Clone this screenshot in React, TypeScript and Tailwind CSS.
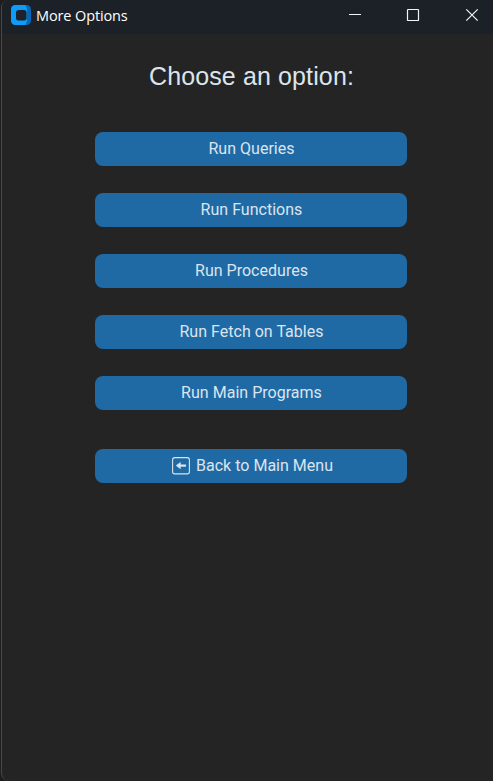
import React from "react";

const options = ["Run Queries", "Run Functions", "Run Procedures", "Run Fetch on Tables", "Run Main Programs"];

function AppLogo() {
  return (
    <svg width="20" height="20" viewBox="0 0 20 20" className="shrink-0">
      <rect width="20" height="20" rx="4.5" fill="#0a66b7" />
      <path d="M4.5 0H14.5L16 4V16L14.5 20H4.5A4.5 4.5 0 0 1 0 15.5V4.5A4.5 4.5 0 0 1 4.5 0Z" fill="#0f9bfb" />
      <rect x="5" y="5" width="10.5" height="10.5" rx="2.5" fill="#1c232b" />
    </svg>
  );
}

function TitleBar() {
  return (
    <header className="flex h-[34px] shrink-0 items-start rounded-tl-[7px] bg-[#1c2128] pl-[9px] text-white">
      <div className="flex h-[30px] flex-1 items-center gap-[5px]">
        <AppLogo />
        <span className="pt-[2px] font-['Open_Sans','Noto_Sans',sans-serif] text-[14.5px] leading-[20px] tracking-[-0.12px]">More Options</span>
      </div>
      <div className="flex h-[30px] items-center">
        <svg width="150" height="30" viewBox="0 0 150 30" fill="none" stroke="#f4f5f6">
          <path d="M6 14.5H18" />
          <rect x="64.5" y="9.5" width="11" height="11" rx="0.6" strokeWidth="1.2" />
          <path d="M123.3 9.3L134.7 20.7M134.7 9.3L123.3 20.7" strokeWidth="1.2" />
        </svg>
      </div>
    </header>
  );
}

function MenuButton({ children }: { children: React.ReactNode }) {
  return (
    <button className="flex h-[34px] w-[312px] items-center justify-center rounded-[8px] bg-[#1f6aa5] pl-[1px] font-['Roboto',sans-serif] text-[16px] leading-[20px] tracking-[0.02px] text-[#dce4ee]">
      {children}
    </button>
  );
}

function BackIcon() {
  return (
    <svg width="18" height="18" viewBox="0 0 18 18" fill="none" stroke="#dce4ee" className="mr-[6px] shrink-0">
      <rect x="0.6" y="0.6" width="16.8" height="16.3" rx="2.2" strokeWidth="1.1" />
      <path d="M7.5 8.6H14" strokeWidth="2.2" />
      <path d="M3.8 8.6L8.6 4.9V12.3Z" fill="#dce4ee" stroke="none" />
    </svg>
  );
}

export default function App() {
  return (
    <div className="h-[781px] w-[493px] overflow-hidden bg-[#1e1e1e] pl-px">
      <div className="flex h-full flex-col rounded-l-[8px] border-l border-[#484848] bg-[#242424]">
        <TitleBar />
        <main className="flex flex-1 flex-col items-center">
          <h1 className="mt-[27px] h-[30px] pl-[8px] font-['Liberation_Sans',Arial,sans-serif] text-[25px] leading-[30px] tracking-[0.12px] text-[#dce4ee]">
            Choose an option:
          </h1>
          <div className="mt-[41px] flex flex-col gap-[27px] pl-[7px]">
            {options.map((label) => (
              <MenuButton key={label}>{label}</MenuButton>
            ))}
          </div>
          <div className="mt-[39px] pl-[7px]">
            <MenuButton>
              <span className="flex items-center pl-[2px]">
                <BackIcon />
                Back to Main Menu
              </span>
            </MenuButton>
          </div>
        </main>
      </div>
    </div>
  );
}
